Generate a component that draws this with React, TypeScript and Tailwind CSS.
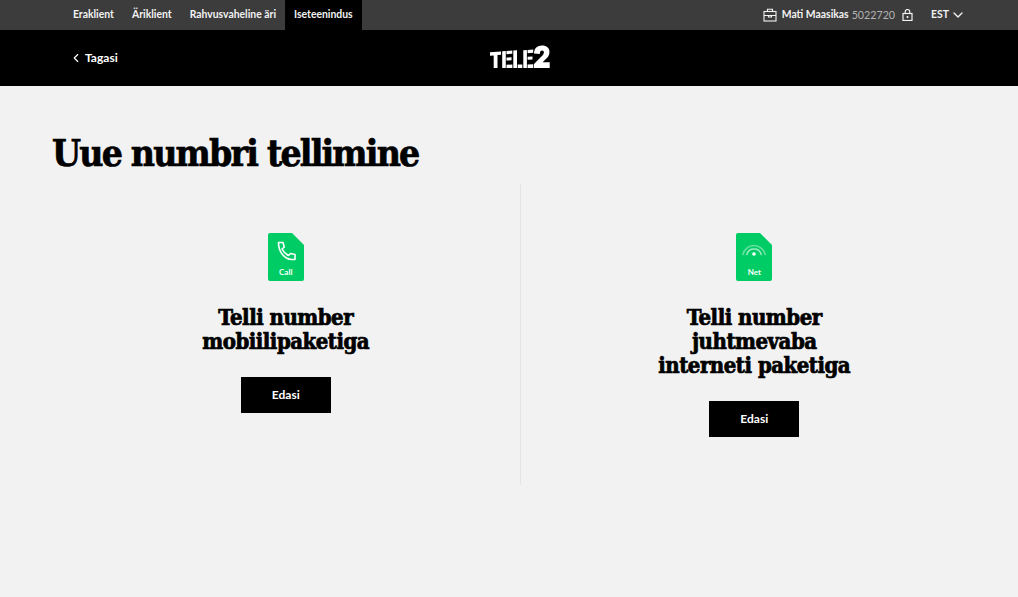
import { ChevronDown, ChevronLeft } from "lucide-react"

const slab =
  "font-['DejaVu_Serif_Condensed','DejaVu_Serif',serif] font-bold text-black [-webkit-text-stroke:0.7px_black]"

function BriefcaseIcon() {
  return (
    <svg width="14" height="14" viewBox="0 0 14 14" fill="none" stroke="#f2f2f2" strokeWidth="1.1">
      <rect x="1" y="3.500" width="12" height="9.500" />
      <path d="M4.500 3.500V1.200h5v2.300M1 7.500h12M5.500 7.500v1.500h3V7.500" />
    </svg>
  )
}

function LockIcon() {
  return (
    <svg width="11" height="12" viewBox="0 0 11 12" fill="none" stroke="#f2f2f2" strokeWidth="1.200">
      <rect x="1" y="4.500" width="9" height="7" />
      <path d="M3.200 4.500V2.800a2.300 2.300 0 0 1 4.600 0v1.700" />
      <path d="M5.500 7v2" strokeWidth="1.600" />
    </svg>
  )
}

function Logo() {
  return (
    <svg width="62" height="24" viewBox="0 0 62 24" fill="#fff">
      {/* T */}
      <path d="M1 7.200 12 6.400v3.400l-3.500.3V23H4.700V10.400L1 10.700z" />
      {/* E, stem and bars split like the stencil logo */}
      <path d="M13.200 6.300l3.600-.3V23h-3.600z" />
      <path d="M17.500 6l5.800-.4v3.200l-5.800.4zM17.500 12.600l5-.3v3l-5 .3zM17.500 19.700l5.900-.2V23h-5.900z" />
      {/* L */}
      <path d="M24.300 5.500l3.700-.3V23h-3.700z" />
      <path d="M28.700 19.600l4.600-.2V23h-4.600z" />
      {/* E */}
      <path d="M34.300 5.200l3.600-.2V23h-3.600z" />
      <path d="M38.600 5l5.600-.4v3.200l-5.600.4zM38.600 11.800l4.900-.3v3l-4.900.3zM38.600 19.500l5.700-.2V23h-5.700z" />
      {/* 2 */}
      <path d="M45 8.500C45.200 3.300 48.300.6 53 .6c4.600 0 7.500 2.500 7.500 6.400 0 3.200-1.700 5.300-4.200 7.600l-2.600 2.600h7V23H45v-3.900l6.900-7c2-1.900 3-3.100 3-4.500 0-1.300-.7-2-1.900-2-1.300 0-2 .9-2.200 3.300z" />
    </svg>
  )
}

function CallIcon() {
  return (
    <svg width="36" height="48" viewBox="0 0 36 48">
      <path d="M2 0h22l12 12v34a2 2 0 0 1-2 2H2a2 2 0 0 1-2-2V2a2 2 0 0 1 2-2z" fill="#00cc66" />
      <path
        d="M10.500 9.500h4.500l1.200 4.500-2.200 2c1.500 3 3.500 5 6.500 6.500l2-2 4.500 1v5h-3C16.500 26.500 10.500 19 10.500 9.500z"
        fill="none"
        stroke="#fff"
        strokeWidth="1.600"
        strokeLinejoin="round"
      />
    </svg>
  )
}

function NetIcon() {
  return (
    <svg width="36" height="48" viewBox="0 0 36 48">
      <path d="M2 0h22l12 12v34a2 2 0 0 1-2 2H2a2 2 0 0 1-2-2V2a2 2 0 0 1 2-2z" fill="#00cc66" />
      <g fill="none" stroke="#fff" strokeLinecap="round">
        <path d="M6.800 21.500a11.500 11.500 0 0 1 22.400 0" strokeWidth="1.500" opacity="0.4" />
        <path d="M10.800 21.500a7.500 7.500 0 0 1 14.400 0" strokeWidth="1.500" opacity="0.6" />
      </g>
      <circle cx="18" cy="21" r="1.800" fill="#fff" />
    </svg>
  )
}

function OrderCard({ icon, label, lines }: { icon: React.ReactNode; label: string; lines: string[] }) {
  return (
    <div className="flex flex-1 flex-col items-center pt-[49px] text-center">
      <div className="relative h-[48px] w-[36px]">
        {icon}
        <span className="absolute inset-x-0 top-[34px] text-center text-[8px] leading-[10px] font-bold text-white">
          {label}
        </span>
      </div>
      <h2 className={`${slab} mt-[24px] text-[22px] leading-[24px] tracking-[-0.5px]`}>
        {lines.map((line) => (
          <div key={line}>{line}</div>
        ))}
      </h2>
      <button className="mt-[24px] h-[36px] w-[90px] bg-black text-[12px] font-bold text-white">Edasi</button>
    </div>
  )
}

export default function App() {
  return (
    <div className="min-h-[597px] bg-[#f2f2f2] font-['Lato',sans-serif]">
      {/* Top bar */}
      <div className="flex h-[30px] items-center justify-between bg-[#3c3c3c] pl-[64px] pr-[52px] text-[10.4px] font-bold text-[#f2f2f2]">
        <nav className="flex h-full items-center">
          <a className="px-[9px]">Eraklient</a>
          <a className="px-[9px]">Äriklient</a>
          <a className="px-[9px]">Rahvusvaheline äri</a>
          <a className="flex h-full items-center bg-black px-[9px]">Iseteenindus</a>
        </nav>
        <div className="flex items-center">
          <BriefcaseIcon />
          <span className="ml-[5px]">Mati Maasikas</span>
          <span className="ml-[3px] text-[10.7px] font-normal text-[#b3b3b3]">5022720</span>
          <span className="ml-[7px] flex">
            <LockIcon />
          </span>
          <span className="ml-[18px]">EST</span>
          <ChevronDown className="ml-[1px] h-[16px] w-[16px]" strokeWidth={2} />
        </div>
      </div>

      {/* Header */}
      <header className="relative flex h-[56px] items-center bg-black pl-[69px]">
        <a className="flex items-center text-[12px] font-bold text-white">
          <ChevronLeft className="h-[14px] w-[14px]" strokeWidth={2} />
          <span className="ml-[2px]">Tagasi</span>
        </a>
        <div className="absolute left-[489px] top-[15px] flex">
          <Logo />
        </div>
      </header>

      {/* Main */}
      <main className="pl-[52px] pr-[30px]">
        <h1 className={`${slab} pt-[39px] pb-[2px] text-[37px] leading-[57px] tracking-[-1.8px]`}>Uue numbri tellimine</h1>
        <div className="flex">
          <OrderCard icon={<CallIcon />} label="Call" lines={["Telli number", "mobiilipaketiga"]} />
          <div className="h-[301px] w-px bg-[#e4e4e4]" />
          <OrderCard
            icon={<NetIcon />}
            label="Net"
            lines={["Telli number", "juhtmevaba", "interneti paketiga"]}
          />
        </div>
      </main>
    </div>
  )
}
